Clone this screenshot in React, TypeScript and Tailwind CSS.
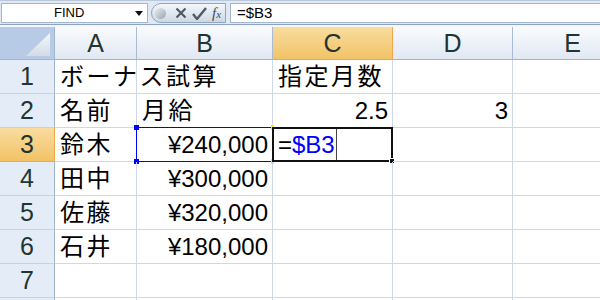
import React from "react";

const cols = [
  { key: "A", w: "w-[82px]" },
  { key: "B", w: "w-[136px]" },
  { key: "C", w: "w-[120px]" },
  { key: "D", w: "w-[120px]" },
  { key: "E", w: "w-[120px]" },
];

type Cell = { text?: string; align?: "left" | "right" };

const rows: Cell[][] = [
  [{ text: "ボーナス試算" }, {}, { text: "指定月数" }, {}, {}],
  [{ text: "名前" }, { text: "月給" }, { text: "2.5", align: "right" }, { text: "3", align: "right" }, {}],
  [{ text: "鈴木" }, { text: "¥240,000", align: "right" }, {}, {}, {}],
  [{ text: "田中" }, { text: "¥300,000", align: "right" }, {}, {}, {}],
  [{ text: "佐藤" }, { text: "¥320,000", align: "right" }, {}, {}, {}],
  [{ text: "石井" }, { text: "¥180,000", align: "right" }, {}, {}, {}],
  [{}, {}, {}, {}, {}],
  [{}, {}, {}, {}, {}],
];

const sans = "font-['Liberation_Sans','Noto_Sans_CJK_JP',sans-serif]";

function FormulaBar() {
  return (
    <div className="h-[27px] bg-[#dfe8f3] border-t border-[#b9c9dd] flex flex-col">
      <div className="h-[20px] mt-[2px] flex items-stretch">
        {/* name box */}
        <div className="w-[147px] ml-[1px] bg-white border border-[#a5b7cf] flex items-center relative">
          <span className={`${sans} text-[13px] text-black ml-[52px]`}>FIND</span>
          <svg className="absolute right-[4px] top-[7px]" width="8" height="5" viewBox="0 0 8 5">
            <path d="M0 0h8L4 5z" fill="#111" />
          </svg>
        </div>
        {/* pill with cancel / enter / fx */}
        <div className="ml-[3px] w-[75px] h-[20px] rounded-l-full border border-[#8fa5c1] bg-gradient-to-b from-[#f4f7fb] to-[#cdd8e6] flex items-center">
          <div className="w-[11px] h-[11px] ml-[3px] rounded-full bg-gradient-to-br from-[#e8ecf1] to-[#9aa5b1]" />
          <svg className="ml-[9px]" width="12" height="12" viewBox="0 0 12 12">
            <path d="M1.5 1.5L10.5 10.5M10.5 1.5L1.5 10.5" stroke="#505a66" strokeWidth="2.2" />
          </svg>
          <svg className="ml-[5px]" width="15" height="13" viewBox="0 0 15 13">
            <path d="M1 7l4 5L14 1" stroke="#505a66" strokeWidth="2.4" fill="none" />
          </svg>
          <span className="ml-[5px] font-['Liberation_Serif',serif] italic text-[15px] text-[#3f4a57] leading-none">
            f<span className="text-[11px]">x</span>
          </span>
        </div>
        <div className="ml-[4px] flex-1 bg-white border-y border-l border-[#a5b7cf] flex items-center">
          <span className={`${sans} text-[15px] text-black ml-[6px]`}>=$B3</span>
        </div>
      </div>
      <div className="h-[1px] mt-[1px] bg-[#8ea3c0]" />
      <div className="flex-1 bg-[#f4f7fb]" />
    </div>
  );
}

function ColHeader() {
  return (
    <div className="flex h-[33px] border-b border-[#9eb6ce]">
      <div className="w-[55px] border-r border-[#9eb6ce] bg-[#b8cbe6] relative shrink-0">
        <svg className="absolute right-[4px] bottom-[3px]" width="24" height="23" viewBox="0 0 24 23">
          <defs>
            <linearGradient id="tri" x1="0" y1="0" x2="0" y2="1">
              <stop offset="0" stopColor="#f6f8fb" />
              <stop offset="1" stopColor="#d3dbe6" />
            </linearGradient>
          </defs>
          <path d="M24 0V23H0z" fill="url(#tri)" />
        </svg>
      </div>
      {cols.map((c) => (
        <div
          key={c.key}
          className={`${c.w} shrink-0 border-r flex items-center justify-center ${sans} text-[25px] leading-none ${
            c.key === "C"
              ? "bg-gradient-to-b from-[#f9dc9e] to-[#f2c366] border-[#f0a848] text-[#1f3331]"
              : "bg-gradient-to-b from-[#f9fbfd] to-[#e1e8f3] border-[#a7bcd3] text-[#1f3533]"
          }`}
        >
          {c.key}
        </div>
      ))}
    </div>
  );
}

export default function App() {
  return (
    <div className="w-[600px] h-[300px] overflow-hidden bg-white">
      <FormulaBar />
      <ColHeader />
      {rows.map((r, i) => {
        const n = i + 1;
        const sel = n === 3;
        return (
          <div key={n} className="flex h-[34px]">
            <div
              className={`w-[55px] shrink-0 border-r border-b flex items-center justify-center ${sans} text-[25px] leading-none ${
                sel
                  ? "bg-gradient-to-b from-[#f9dc9e] to-[#f2c366] border-[#f0a848] text-[#1f3331]"
                  : "bg-[#e4ecf7] border-r-[#9eb6ce] border-b-[#c5d2e3] text-[#1f3533]"
              }`}
            >
              {n < 8 ? n : ""}
            </div>
            {r.map((cell, j) => {
              const isB3 = sel && j === 1;
              const isC3 = sel && j === 2;
              return (
                <div
                  key={j}
                  className={`${cols[j].w} shrink-0 border-r border-b border-[#d0d7e5] relative flex items-center ${
                    cell.align === "right" ? "justify-end pr-[4px]" : "pl-[5px]"
                  }`}
                >
                  {cell.text && (
                    <span
                      className={`${sans} text-[24px] text-black leading-none whitespace-nowrap ${
                        cell.align === "right" ? "" : "tracking-[2.5px]"
                      }`}
                    >
                      {cell.text}
                    </span>
                  )}
                  {isB3 && (
                    <div className="absolute -left-[1px] -top-[1px] -right-[1px] -bottom-[1px] border-[1.5px] border-[#0000ff]">
                      <div className="absolute -left-[3px] -top-[3px] w-[5px] h-[5px] bg-[#0000ff]" />
                      <div className="absolute -left-[3px] -bottom-[3px] w-[5px] h-[5px] bg-[#0000ff]" />
                      <div className="absolute -right-[2px] -top-[3px] w-[3px] h-[5px] bg-[#f8f000]" />
                      <div className="absolute -right-[2px] -bottom-[3px] w-[3px] h-[5px] bg-[#f8f000]" />
                    </div>
                  )}
                  {isC3 && (
                    <>
                      <div className="absolute -left-[1px] -top-[1px] -right-[1px] -bottom-[1px] border-2 border-[#111]">
                        <div className="absolute -right-[4px] -bottom-[4px] w-[6px] h-[6px] bg-[#111] border border-white" />
                      </div>
                      <span className={`${sans} text-[24px] leading-none text-black`}>
                        =<span className="text-[#0000ff]">$B3</span>
                      </span>
                      <div className="ml-[1px] w-[1px] h-[32px] bg-[#444]" />
                    </>
                  )}
                </div>
              );
            })}
          </div>
        );
      })}
    </div>
  );
}
